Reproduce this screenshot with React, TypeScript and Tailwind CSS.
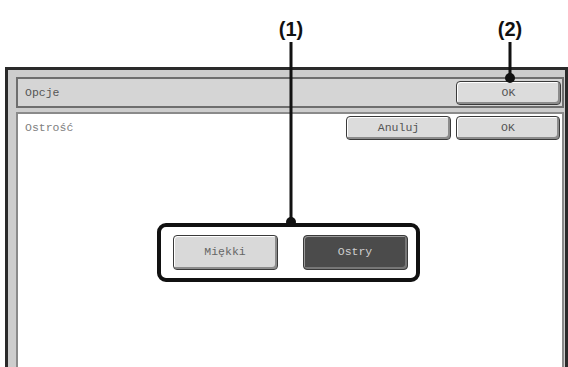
import React from "react";

const mono = "font-['Liberation_Mono','DejaVu_Sans_Mono',monospace]";

const btn =
  "flex items-center justify-center rounded-[4px] border border-[#3a3a3a] shadow-[inset_-2px_-2px_0_#8c8c8c,inset_1px_1px_0_#ffffff] text-[11.5px] " +
  mono;

const Callout = ({ label, x, top, lineTop, lineBottom }: { label: string; x: number; top: number; lineTop: number; lineBottom: number }) => (
  <>
    <div
      className="absolute font-['Liberation_Sans',Arial,sans-serif] font-bold text-[20px] leading-none text-[#111] -translate-x-1/2"
      style={{ left: x, top }}
    >
      {label}
    </div>
    <div
      className="absolute w-[3px] bg-[#111] -translate-x-1/2"
      style={{ left: x, top: lineTop, height: lineBottom - lineTop }}
    />
    <div
      className="absolute w-[10px] h-[10px] rounded-full bg-[#111] -translate-x-1/2 -translate-y-1/2"
      style={{ left: x, top: lineBottom }}
    />
  </>
);

export default function App() {
  return (
    <div className="relative w-[568px] h-[367px] overflow-hidden bg-white">
      <div className="ml-[5px] mt-[67px] w-[563px] h-[310px] border-t-[3px] border-l-[3px] border-r-[3px] border-[#2a2a2a] bg-[#cdcdcd] pl-[8px] pt-[7px] pr-[1px] flex flex-col gap-[4px]">
        {/* header */}
        <div className="h-[31px] shrink-0 bg-[#d5d5d5] border-2 border-[#6e6e6e] flex items-center justify-between pl-[7px] pr-[1px]">
          <span className={`text-[11.5px] text-[#555] ${mono}`}>Opcje</span>
          <div className={`${btn} w-[105px] h-[24px] bg-[#dcdcdc] text-[#555]`}>OK</div>
        </div>
        {/* content */}
        <div className="flex-1 bg-white border-2 border-[#8a8a8a] flex flex-col">
          <div className="h-[28px] shrink-0 flex items-center justify-between pl-[7px] pr-[2px]">
            <span className={`text-[11.5px] text-[#808080] ${mono}`}>Ostrość</span>
            <div className="flex gap-[5px]">
              <div className={`${btn} w-[105px] h-[24px] bg-[#dcdcdc] text-[#555]`}>Anuluj</div>
              <div className={`${btn} w-[104px] h-[24px] bg-[#dcdcdc] text-[#555]`}>OK</div>
            </div>
          </div>
          <div className="h-[220px] flex items-center justify-center">
            <div className="border-4 border-[#111] rounded-[9px] pl-[12px] pr-[8px] py-[8px] flex gap-[25px] -ml-[4px]">
              <div className={`${btn} w-[105px] h-[35px] bg-[#d9d9d9] text-[#666]`}>Miękki</div>
              <div className={`${btn} w-[105px] h-[35px] bg-[#4b4b4b] text-[#cfcfcf] shadow-[inset_-2px_-2px_0_#777,inset_1px_1px_0_#9a9a9a]`}>Ostry</div>
            </div>
          </div>
        </div>
      </div>
      <Callout label="(1)" x={291} top={19} lineTop={42} lineBottom={222} />
      <Callout label="(2)" x={510} top={19} lineTop={42} lineBottom={78} />
    </div>
  );
}
